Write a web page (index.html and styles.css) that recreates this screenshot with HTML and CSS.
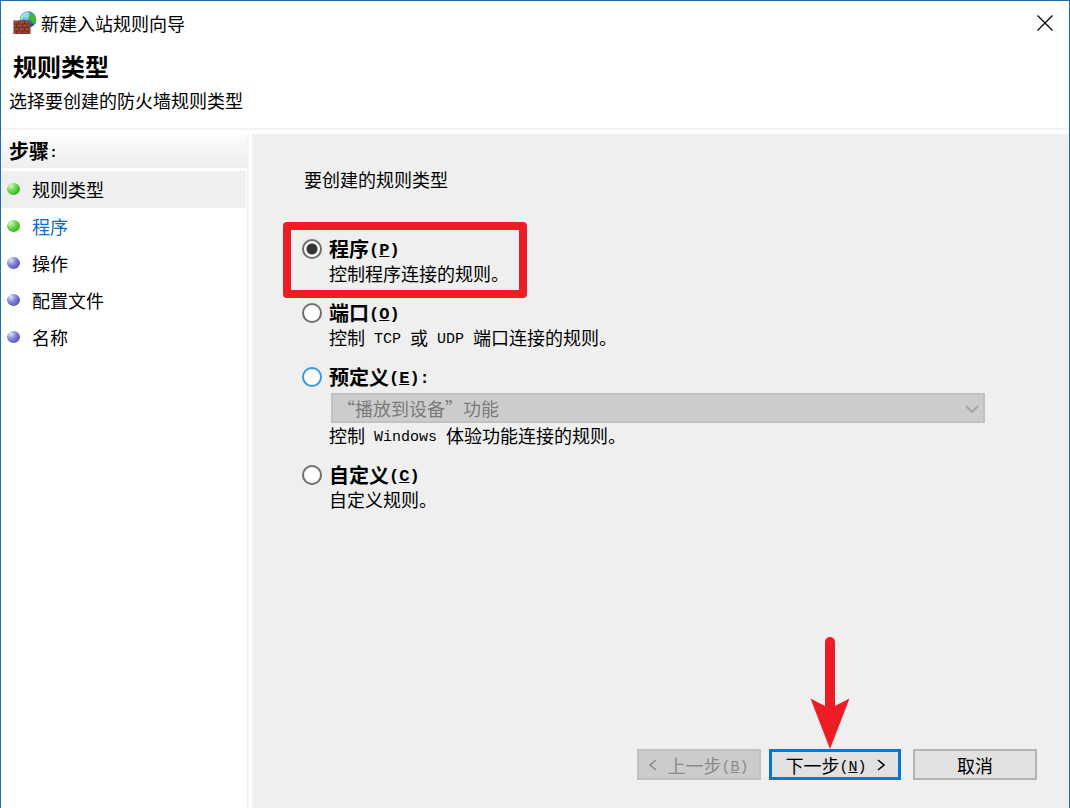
FILE: index.html
```html
<!DOCTYPE html>
<html lang="zh-CN">
<head>
    <meta charset="UTF-8">
    <meta name="viewport" content="width=device-width, initial-scale=1.0">
    <title>新建入站规则向导</title>
    <link rel="stylesheet" href="styles.css">
</head>
<body>
    <div class="window">
        <div class="titlebar">
            <svg class="app-icon" viewBox="0 0 24 24">
                <defs>
                    <radialGradient id="globe" cx="0.4" cy="0.3" r="0.75">
                        <stop offset="0" stop-color="#a8e4fb"/>
                        <stop offset="0.45" stop-color="#3a8fdc"/>
                        <stop offset="1" stop-color="#123f9c"/>
                    </radialGradient>
                </defs>
                <circle cx="15" cy="8.500" r="8.300" fill="url(#globe)"/>
                <path d="M8 5l3-3 4-1 1 2-2 2-3 1-2 3h-2z" fill="#9fe0d0"/>
                <path d="M17 1.500l3 1 3 4v4l-3 3-1-3-3-2 0-3 2-1z" fill="#46b534"/>
                <path d="M0.500 9.500h16l1 1v12.500h-17z" fill="#6e2a20"/>
                <path d="M1 10h4v2.500H1zM6 10h5v2.500H6zM12 10h5v2.500h-5zM1 13.500h2v2.500H1zM4 13.500h5v2.500H4zM10 13.500h4v2.500h-4zM15 13.500h2v2.500h-2zM1 17h4v2.500H1zM6 17h5v2.500H6zM12 17h5v2.500h-5zM1 20.500h2v2H1zM4 20.500h5v2H4zM10 20.500h4v2h-4zM15 20.500h2v2h-2z" fill="#9c4a38"/>
            </svg>
            <span class="window-title">新建入站规则向导</span>
            <button class="close" type="button" aria-label="关闭">
                <svg viewBox="0 0 16 16"><path d="M0.500 0.500l15 15M15.500 0.500l-15 15" stroke="#000" stroke-width="1.200" fill="none"/></svg>
            </button>
        </div>

        <header class="header">
            <h1>规则类型</h1>
            <p>选择要创建的防火墙规则类型</p>
        </header>

        <div class="content">
            <nav class="sidebar">
                <h2>步骤<span class="en">:</span></h2>
                <ul class="steps">
                    <li class="step done current">规则类型</li>
                    <li class="step done"><a href="#">程序</a></li>
                    <li class="step">操作</li>
                    <li class="step">配置文件</li>
                    <li class="step">名称</li>
                </ul>
            </nav>

            <form class="main">
                <p class="prompt">要创建的规则类型</p>
                <div class="options">
                    <div class="option">
                        <input type="radio" name="type" id="type-program" checked>
                        <label for="type-program">程序<span class="en">(<u>P</u>)</span></label>
                        <p class="desc">控制程序连接的规则。</p>
                        <div class="highlight"></div>
                    </div>
                    <div class="option">
                        <input type="radio" name="type" id="type-port">
                        <label for="type-port">端口<span class="en">(<u>O</u>)</span></label>
                        <p class="desc">控制<span class="en"> TCP </span>或<span class="en"> UDP </span>端口连接的规则。</p>
                    </div>
                    <div class="option">
                        <input type="radio" name="type" id="type-predefined" class="hot">
                        <label for="type-predefined">预定义<span class="en">(<u>E</u>):</span></label>
                        <div class="select-box">
                            <select aria-label="预定义" disabled>
                                <option>“播放到设备”功能</option>
                            </select>
                            <svg class="chevron" viewBox="0 0 14 8"><path d="M1 1l6 6 6-6" stroke="#a6a6a6" stroke-width="2" fill="none"/></svg>
                        </div>
                        <p class="desc">控制<span class="en"> Windows </span>体验功能连接的规则。</p>
                    </div>
                    <div class="option">
                        <input type="radio" name="type" id="type-custom">
                        <label for="type-custom">自定义<span class="en">(<u>C</u>)</span></label>
                        <p class="desc">自定义规则。</p>
                    </div>
                </div>

                <div class="buttons">
                    <button class="btn" type="button" disabled><svg class="angle" viewBox="0 0 8 12"><path d="M7 1L1 6l6 5"/></svg><span>上一步<span class="en">(<u>B</u>)</span></span></button>
                    <div class="next">
                        <button class="btn btn-default" type="button"><span>下一步<span class="en">(<u>N</u>)</span></span><svg class="angle" viewBox="0 0 8 12"><path d="M1 1l6 5-6 5"/></svg></button>
                        <svg class="arrow" viewBox="0 0 40 112"><path d="M15 5a5 5 0 0 1 10 0v64l14.500-7.500L20 112 0.500 61.500 15 69z" fill="#ee1c25"/></svg>
                    </div>
                    <button class="btn cancel" type="button">取消</button>
                </div>
            </form>
        </div>
    </div>
</body>
</html>
```
FILE: styles.css
```css
* {
    box-sizing: border-box;
}

body {
    margin: 0;
    background-color: #fff;
    color: #000;
    font-family: "Noto Sans CJK SC", sans-serif;
    font-size: 18px;
    line-height: 24px;
}

h1, h2, p, ul {
    margin: 0;
    padding: 0;
}

button, select {
    font: inherit;
    color: inherit;
}

.en {
    font-family: "Liberation Mono", monospace;
    font-size: 15px;
    line-height: 1;
    vertical-align: 2px;
    white-space: pre;
}

.window {
    display: flex;
    flex-direction: column;
    min-height: 100vh;
    border: 1px solid #1a6fb5;
    border-bottom: none;
}

.titlebar {
    display: flex;
    align-items: center;
    height: 44px;
    padding: 0 16px 0 12px;
}

.app-icon {
    width: 24px;
    height: 24px;
    margin-right: 4px;
}

.window-title {
    flex: 1;
}

.close {
    display: flex;
    padding: 0;
    border: none;
    background: none;
}

.close svg {
    width: 16px;
    height: 16px;
}

.header {
    padding: 5px 8px 16px;
    border-bottom: 2px solid #f3f3f3;
}

.header h1 {
    padding-left: 4px;
    font-size: 24px;
    line-height: 32px;
}

.header p {
    margin-top: 6px;
}

.content {
    display: flex;
    flex: 1;
    padding-top: 4px;
}

.sidebar {
    width: 248px;
    margin-right: 3px;
    border-right: 2px solid #f3f3f3;
}

.sidebar h2 {
    height: 34px;
    padding-left: 8px;
    background: linear-gradient(#fcfcfc, #eee);
    font-size: 20px;
    line-height: 34px;
}

.steps {
    margin-top: 3px;
    list-style: none;
}

.step {
    display: flex;
    align-items: center;
    height: 37px;
    padding: 0 0 1px 6px;
}

.step::before {
    content: "";
    width: 13px;
    height: 12px;
    margin-right: 12px;
    border-radius: 50%;
    background: radial-gradient(circle at 30% 25%, #e4e4fa 0, #8482d8 40%, #5a55c4 75%);
}

.step.done::before {
    background: radial-gradient(circle at 30% 25%, #d8f5cc 0, #6cd64c 40%, #35b81c 75%);
}

.step.current {
    margin-right: 1px;
    background-color: #efefef;
}

.step a {
    color: #0a6cd0;
    text-decoration: none;
}

.main {
    display: flex;
    flex: 1;
    flex-direction: column;
    padding: 33px 32px 28px 50px;
    background-color: #efefef;
}

.prompt {
    padding-left: 2px;
}

.options {
    display: flex;
    flex-direction: column;
    gap: 16px;
    margin: 46px 52px 0 0;
}

.option {
    position: relative;
    display: grid;
    grid-template-columns: 20px 1fr;
    column-gap: 7px;
    align-items: center;
}

.option label {
    font-size: 20px;
    font-weight: bold;
}

.option label .en {
    font-size: 17px;
}

.desc {
    grid-column: 2;
}

input[type="radio"] {
    appearance: none;
    width: 20px;
    height: 20px;
    margin: 0;
    border: 2px solid #6c6c6c;
    border-radius: 50%;
    background-color: #fff;
}

input[type="radio"]:checked {
    background: radial-gradient(circle, #333 5px, #fff 6px);
}

input[type="radio"].hot {
    border-color: #3a97e2;
}

.highlight {
    position: absolute;
    top: -15px;
    left: -19px;
    width: 244px;
    height: 76px;
    border: 8px solid #ee1c25;
    border-radius: 4px;
    pointer-events: none;
}

.select-box {
    position: relative;
    grid-column: 2;
    margin: 4px 0 0 2px;
}

select {
    appearance: none;
    display: block;
    width: 100%;
    height: 30px;
    padding: 0 4px;
    border: 2px solid #c1c1c1;
    border-radius: 0;
    background-color: #ccc;
}

select:disabled {
    color: #7b7b7b;
    opacity: 1;
}

.chevron {
    position: absolute;
    top: 12px;
    right: 6px;
    width: 14px;
    height: 8px;
}

.buttons {
    display: flex;
    justify-content: flex-end;
    gap: 8px;
    margin-top: auto;
}

.btn {
    display: flex;
    align-items: center;
    justify-content: center;
    gap: 10px;
    width: 124px;
    height: 31px;
    padding: 0;
    border: 2px solid #b4b4b4;
    background-color: #e1e1e1;
}

.btn:disabled {
    border-color: #c1c1c1;
    background-color: #ccc;
    color: #8a8a8a;
}

.btn-default {
    width: 132px;
    border: 3px solid #0078d7;
}

.cancel {
    margin-left: 4px;
}

.angle {
    width: 8px;
    height: 12px;
    fill: none;
    stroke: currentColor;
    stroke-width: 1.500;
}

.next {
    position: relative;
}

/* points at the default button */
.arrow {
    position: absolute;
    bottom: 100%;
    left: 41px;
    width: 40px;
    height: 112px;
}
```
